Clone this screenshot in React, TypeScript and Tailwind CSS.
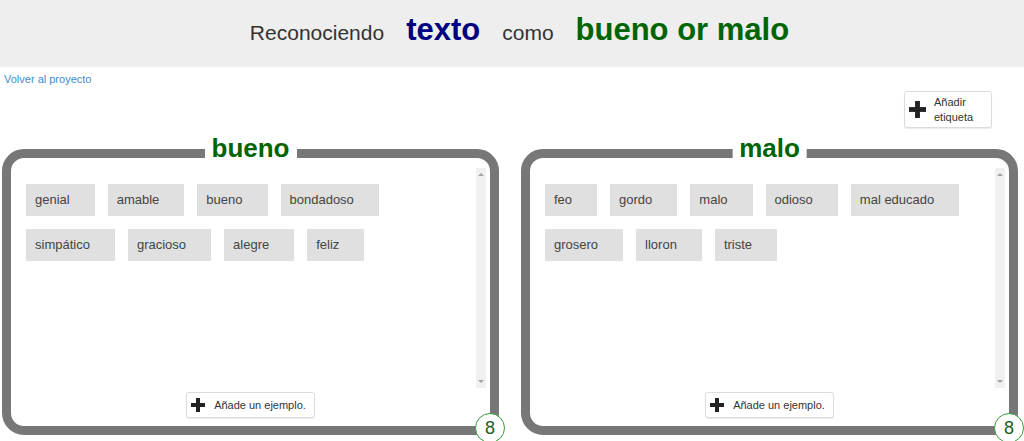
import React from 'react';

const FONT = { fontFamily: '"Liberation Sans", Arial, sans-serif' };

const bueno = ['genial', 'amable', 'bueno', 'bondadoso', 'simpático', 'gracioso', 'alegre', 'feliz'];
const malo = ['feo', 'gordo', 'malo', 'odioso', 'mal educado', 'grosero', 'lloron', 'triste'];

const Plus = ({ size }: { size: number }) => (
  <svg width={size} height={size} viewBox="0 0 14 14" className="shrink-0">
    <rect x="0" y="5" width="14" height="4" fill="#222" />
    <rect x="5" y="0" width="4" height="14" fill="#222" />
  </svg>
);

const Panel = ({ title, words }: { title: string; words: string[] }) => (
  <div className="relative w-[497px] h-[286px] border-[9px] border-[#777777] rounded-[22px] bg-white flex flex-col">
    <div className="absolute top-[-25px] left-1/2 -translate-x-1/2 px-[7px] bg-white text-[26px] leading-[30px] font-bold text-[#006400]">
      {title}
    </div>

    <div className="mt-[10px] h-[220px] flex">
      <div className="flex-1 pl-[15px] pr-[15px] pt-[16px]">
        <div className="flex flex-wrap gap-[13px]">
          {words.map((w) => (
            <div key={w} className="h-[32px] flex items-center pl-[9px] pr-[25px] bg-[#e0e0e0] text-[13px] text-[#444]">
              {w}
            </div>
          ))}
        </div>
      </div>
      <div className="w-[10px] mr-[4px] bg-[#f1f1f1] flex flex-col items-center justify-between py-[5px]">
        <div className="w-0 h-0 border-l-[3px] border-r-[3px] border-b-[3px] border-l-transparent border-r-transparent border-b-[#a3a3a3]" />
        <div className="w-0 h-0 border-l-[3px] border-r-[3px] border-t-[3px] border-l-transparent border-r-transparent border-t-[#a3a3a3]" />
      </div>
    </div>

    <div className="mt-[4px] flex justify-center">
      <button className="h-[26px] flex items-center gap-[9px] pl-[4px] pr-[8px] bg-white border border-[#dcdcdc] rounded-[3px] shadow-[0_1px_1px_rgba(0,0,0,0.08)] text-[11px] text-[#333]">
        <Plus size={14} />
        <span>Añade un ejemplo.</span>
      </button>
    </div>

    <div className="absolute right-[-15px] bottom-[-17px] w-[30px] h-[30px] rounded-full border border-[#3a9a3a] bg-white flex items-center justify-center text-[18px] leading-none text-[#1b5e20]">
      8
    </div>
  </div>
);

export default function App() {
  return (
    <div className="w-[1024px] h-[441px] overflow-hidden bg-white" style={FONT}>
      <header className="h-[67px] bg-[#eeeeee] flex items-baseline justify-center gap-[22px] pt-[7px] pl-[15px]">
        <span className="text-[21px] text-[#333]">Reconociendo</span>
        <span className="text-[31px] font-bold text-[#000080]">texto</span>
        <span className="text-[21px] text-[#333]">como</span>
        <span className="text-[31px] font-bold text-[#006400]">bueno or malo</span>
      </header>

      <div className="pt-[6px] pl-[4px] text-[11px] leading-[13px]">
        <a className="text-[#428bca]">Volver al proyecto</a>
      </div>

      <div className="mt-[5px] flex justify-end pr-[32px]">
        <button className="w-[88px] h-[37px] flex items-center gap-[8px] pl-[4px] bg-white border border-[#dcdcdc] rounded-[3px] shadow-[0_1px_1px_rgba(0,0,0,0.08)] text-[11px] leading-[15px] text-[#333] text-left">
          <Plus size={17} />
          <span>Añadir<br />etiqueta</span>
        </button>
      </div>

      <div className="mt-[21px] pl-[2px] flex gap-[22px]">
        <Panel title="bueno" words={bueno} />
        <Panel title="malo" words={malo} />
      </div>
    </div>
  );
}
